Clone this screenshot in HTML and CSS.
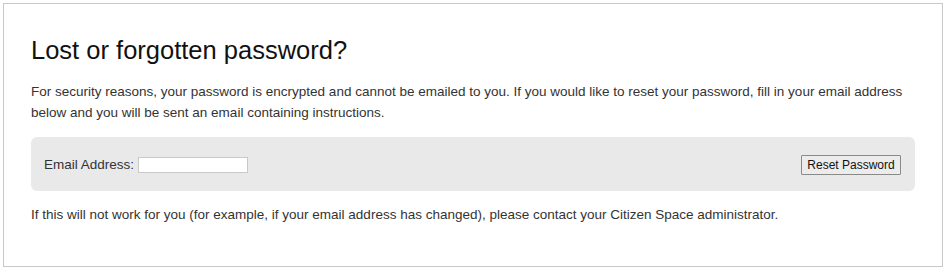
FILE: index.html
```html
<!DOCTYPE html>
<html lang="en">
<head>
<meta charset="utf-8">
<title>Lost or forgotten password?</title>
<link rel="stylesheet" href="styles.css">
</head>
<body>
<div class="panel">
  <h1 class="title">Lost or forgotten password?</h1>
  <p class="intro">For security reasons, your password is encrypted and cannot be emailed to you. If you would like to reset your password, fill in your email address below and you will be sent an email containing instructions.</p>
  <form class="reset-form">
    <label class="field">
      <span class="field-label">Email Address:</span>
      <input class="field-input" type="text">
    </label>
    <button class="reset-btn" type="button">Reset Password</button>
  </form>
  <p class="note">If this will not work for you (for example, if your email address has changed), please contact your Citizen Space administrator.</p>
</div>
</body>
</html>
```

FILE: styles.css
```css
html, body {
  margin: 0;
  padding: 0;
  background: #fff;
}
body {
  font-family: "Liberation Sans", Arial, sans-serif;
  color: #333;
}
.panel {
  margin: 3px;
  width: 940px;
  height: 264px;
  box-sizing: border-box;
  border: 1px solid #c8c8c8;
  padding: 0 27px;
}
.title {
  margin: 30px 0 0;
  font-size: 25.5px;
  font-weight: normal;
  line-height: 32px;
  color: #111;
}
.intro {
  margin: 15px 0 0;
  font-size: 13.5px;
  line-height: 21px;
}
.reset-form {
  margin-top: 14px;
  background: #e9e9e9;
  border-radius: 6px;
  height: 54px;
  padding: 0 14px 0 13px;
  display: flex;
  align-items: center;
  justify-content: space-between;
}
.field {
  display: flex;
  align-items: center;
  gap: 4px;
  font-size: 13.5px;
}
.field-input {
  width: 110px;
  height: 16px;
  box-sizing: border-box;
  border: 1px solid #c9c9c9;
  background: #fff;
  padding: 0;
  margin: 2px 0 0;
}
.reset-btn {
  font-family: "Liberation Sans", Arial, sans-serif;
  font-size: 12px;
  color: #111;
  width: 100px;
  height: 20px;
  box-sizing: border-box;
  padding: 0;
  border: 1px solid #8a8a8a;
  background: #ececec;
  border-radius: 1px;
  margin-top: 1px;
}
.note {
  margin: 13px 0 0;
  font-size: 13.5px;
  line-height: 21px;
}
```
